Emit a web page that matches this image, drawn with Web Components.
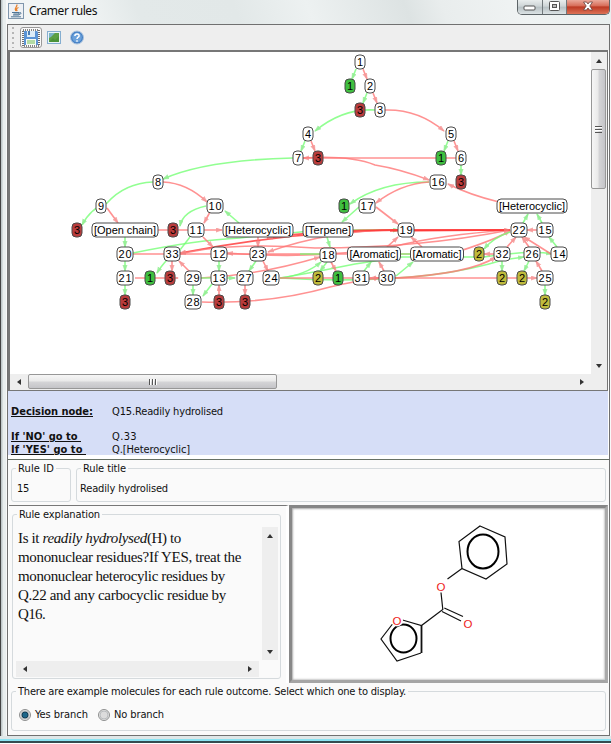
<!DOCTYPE html>
<html lang="en"><head><meta charset="utf-8"><title>Cramer rules</title>
<style>html,body{margin:0;width:611px;height:744px;overflow:hidden;background:#fff}
body{font:11px "DejaVu Sans Condensed","DejaVu Sans",sans-serif;color:#111}</style></head>
<body>
<cramer-window></cramer-window>
<script>
const define=(name,html,setup)=>customElements.define(name,class extends HTMLElement{
  connectedCallback(){
    if(this.shadowRoot)return;
    const r=this.attachShadow({mode:'open'});
    const t=document.createElement('template');t.innerHTML=html;
    r.append(t.content.cloneNode(true));
    if(setup)setup(this,r);
  }
});

// A text run whose tracking is set so that it fills the width in its "w" attribute.
define('ui-text',`<style>:host{display:inline-block;white-space:pre;line-height:13px}span{display:inline-block;text-decoration:inherit}</style><span><slot></slot></span>`,
(h,r)=>{const s=r.querySelector('span'),w=+h.getAttribute('w');h.style.width=w+'px';
  const n=h.textContent.length;s.style.letterSpacing=((w-s.getBoundingClientRect().width)/n)+'px';});

define('scroll-bar',`<style>
:host{display:flex;flex-direction:column;background:#eee;box-sizing:border-box;align-items:center}
:host([dir=h]){flex-direction:row}
.b{flex:none;width:16px;height:17px;display:flex;align-items:center;justify-content:center}
:host([dir=h]) .b{width:18px;height:16px}
.track{flex:1;display:flex;flex-direction:column;align-self:stretch}
:host([dir=h]) .track{flex-direction:row}
.thumb{box-sizing:border-box;border:1px solid #979797;border-radius:2px;background:linear-gradient(90deg,#f6f6f6,#e9e9e9 48%,#d5d5d7 52%,#c4c4c8);display:flex;align-items:center;justify-content:center;margin:0 1px 0 0}
:host([dir=h]) .thumb{background:linear-gradient(#f6f6f6,#e9e9e9 48%,#d5d5d7 52%,#c4c4c8);margin:0 0 1px}
.g{width:7px;height:7px;background:repeating-linear-gradient(#555 0 1px,#fff 1px 2px,transparent 2px 3px)}
:host([dir=h]) .g{width:8px;height:6px;background:repeating-linear-gradient(90deg,#555 0 1px,#fff 1px 2px,transparent 2px 3px)}
svg{display:block}</style>
<div class="b"><svg width="6" height="6"><path fill="#333"/></svg></div><div class="track"></div><div class="b"><svg width="6" height="6"><path fill="#333"/></svg></div>`,
(h,r)=>{const hz=h.getAttribute('dir')==='h',p=r.querySelectorAll('path');
  p[0].setAttribute('d',hz?'M5 0V6L1 3Z':'M0 5H6L3 1Z');p[1].setAttribute('d',hz?'M1 0V6L5 3Z':'M0 1H6L3 5Z');
  const t=h.getAttribute('thumb');
  if(t){const d=document.createElement('div');d.className='thumb';d.style[hz?'width':'height']=t+'px';d.innerHTML='<div class="g"></div>';r.querySelector('.track').append(d);}});

define('title-bar',`<style>
:host{display:flex;height:24px;align-items:flex-start;background:linear-gradient(70deg,#f2f5f5 0 12%,#e3e9e9 22%,#e2e8e8 38%,#edf1f1 50%,#dde3e3 66%,#e9eded 72%,#f0f3f3 85%,#e8eeee)}
.icon{margin:3px 5px 0 8px;width:16px;height:16px}
:host{margin-left:1px}.icon{margin-left:0}
ui-text{font:12px "Noto Sans",sans-serif;margin-top:2px;flex:none;line-height:17px}
.btns{margin-left:auto;margin-right:1px;display:flex;box-sizing:border-box;width:93px;height:15px;border:1px solid #5d6467;border-top:0;border-radius:0 0 5px 5px;overflow:hidden}
.btns div{display:flex;justify-content:center;width:25px;border-right:1px solid #71787b;background:linear-gradient(#e9eded,#cdd4d6 45%,#b7c0c3 50%,#dbe2e4);box-sizing:border-box}
.btns .x{width:42px;border:0;background:linear-gradient(#eaa99b,#d8705c 40%,#bd3a24 50%,#dc7256)}
</style>
<svg class="icon" viewBox="0 0 16 16"><rect x=".5" y=".5" width="15" height="15" fill="#eef1f5" stroke="#8096ac"/><path d="M8.800 1.500C10 4 5.500 4.500 7.800 8M10.500 4.500C8 5.500 8 6.500 9.300 8" fill="none" stroke="#e8822c" stroke-width="1.300"/><path d="M4 9.500h7v1.500H5.500M5 12h6M3 13.800h10M11.500 9.500c2.500-.3 1.500 2-.5 2.200" fill="none" stroke="#4f7595"/></svg>
<ui-text w="68">Cramer rules</ui-text>
<div class="btns"><div><svg width="13" height="14"><rect x="1" y="6" width="11" height="4" rx="1" fill="#fff" stroke="#555"/></svg></div>
<div><svg width="13" height="14"><rect x="1.500" y="1.500" width="10" height="9" rx="1" fill="#fff" stroke="#555"/><rect x="4.500" y="4.500" width="4" height="3" fill="#bbb" stroke="#555"/></svg></div>
<div class="x"><svg width="14" height="14"><path d="M2.500 2H5.500L7 4L8.500 2H11.500L8.800 6L11.500 10H8.500L7 8L5.500 10H2.500L5.200 6Z" fill="#fff" stroke="#67413c" stroke-width=".8"/></svg></div></div>`);

define('tool-bar',`<style>
:host{display:flex;height:25px;background:#eee;align-items:center;padding-left:4px;box-sizing:border-box}
.grip{width:2px;height:21px;background:repeating-linear-gradient(#b5b5b5 0 2px,transparent 2px 5px);margin-right:6px}
.save{width:22px;height:21px;box-sizing:border-box;border:1px solid #999;border-radius:3px;background:#fafafa;display:flex;align-items:center;justify-content:center;margin-right:4px}
.pic{margin-right:7px}svg{display:block}
</style><div class="grip"></div>
<div class="save"><svg width="18" height="18"><path d="M2 2H15L16 3V16H2Z" fill="#5b94d6"/><rect x="5" y="2" width="8" height="6" fill="#dcecf8"/><rect x="6" y="2" width="2" height="4" fill="#4c7eb5"/><rect x="4" y="10" width="10" height="6" fill="#f5faf4"/><path d="M5 12H13M5 14H13" stroke="#70bb55"/><rect x="1" y="1" width="16" height="16" fill="none" stroke="#111" stroke-width="1.200" stroke-dasharray="1 1"/></svg></div>
<svg class="pic" width="16" height="16"><rect x="1.500" y="1.500" width="13" height="12" fill="#e9f3f8" stroke="#85aed0"/><rect x="3" y="3" width="10" height="9" fill="#5b9f45"/><path d="M3 3H9L5 7L3 8Z" fill="#79b3c4"/><path d="M3 12L7 8L9 10L13 6V12Z" fill="#4b9339"/></svg>
<svg width="16" height="16"><circle cx="8" cy="7.500" r="6.500" fill="#4882c5" stroke="#a9c3df"/><circle cx="8" cy="7.500" r="4.800" fill="#6ba1db"/><path d="M5.900 6C5.900 3.300 10.200 3.300 10.100 5.900C10.100 7.200 8 7.200 8 9M8 10.300V11.800" fill="none" stroke="#fff" stroke-width="1.500"/></svg>`);

define('rule-graph',`<style>:host{display:block;width:581px;height:322px;background:#fff}svg{display:block}
text{font:11px "Liberation Sans",Arial,sans-serif;text-anchor:middle;fill:#000}
.R{stroke:#f77}.G{stroke:#7f7}.D{stroke:#f33}
path.e{fill:none;stroke-width:1.600;opacity:.8}</style>
<svg width="581" height="322" viewBox="10 52 581 322"><defs>
<marker id="mR" markerUnits="userSpaceOnUse" markerWidth="8" markerHeight="6" refX="6" refY="2.500" orient="auto"><path d="M0 0L7 2.500L0 5Z" fill="#f28080" fill-opacity=".85"/></marker>
<marker id="mG" markerUnits="userSpaceOnUse" markerWidth="8" markerHeight="6" refX="6" refY="2.500" orient="auto"><path d="M0 0L7 2.500L0 5Z" fill="#7bea7b" fill-opacity=".85"/></marker></defs><g id="e"></g><g id="n"></g></svg>`,
(h,r)=>{
 const edges=`G M356 69L352 79
R M363 69L367 79
G M367 93L363 103
R M373 93L377 103
G M375 110Q343 108 315 131
R M385 110Q418 109 444 131
G M305 141L301 151
R M311 141L315 151
G M448 141L444 151
R M454 141L458 151
G M461 165V175
R M456 158H303
G M293 158Q206 160 163 179
R M303 158Q350 155 375 165Q400 169 429 180
G M153 182Q125 183 107 203Q91 208 82 225
R M163 182Q187 183 207 202
R M107 208L118 223
G M206 206Q183 211 180 226
R M210 212L204 223
R M92 230H222
G M239 223L225 211
G M429 182Q380 182 350 204
G M359 207L342 222
R M429 182Q400 184 376 203
R M376 207L398 224
R M499 202Q470 195 448 184
G M125 237V247
G M125 261V271
G M125 285V295
R M131 254H450Q490 242 510 231
G M133 253Q196 240 240 238Q285 233 325 230H399
D M510 230H410Q300 230 180 253
R M510 230Q420 248 315 248Q230 242 180 254
R M510 230Q440 235 396 246Q320 260 227 253
R M399 230Q330 230 268 252
D M510 230H410Q330 229 267 238
G M190 237L180 250Q166 258 157 273
R M203 237L213 247
R M258 237V247
R M172 261V271
R M190 272L179 261
R M135 278H178
R M201 278Q260 275 320 257
G M219 261V271
G M256 261L249 271
R M263 261L268 271
G M193 285V295
G M212 284L203 296
G M201 278H235
G M280 278Q306 275 321 262
G M280 278Q310 273 355 264L402 257H484Q530 250 552 254
G M280 278Q420 286 503 260L524 257
G M327 237L330 247
G M327 262L320 271
R M331 262L336 271
R M219 295V285
R M245 285V295
R M202 302Q270 304 330 287Q360 280 380 278
R M280 278H537
R M380 278H370
G M364 271L371 262
R M384 271L379 262
G M396 276L413 262
R M387 247L398 237
R M422 247L411 237
R M394 278Q470 274 496 257
G M424 254H382
G M401 254H365
R M494 254H484
G M510 232Q493 238 484 249
G M523 223L528 214
G M542 223L537 214
R M553 230H527
R M507 247L516 237
R M529 247L522 237
R M551 254Q540 247 524 237
G M557 247L549 237
G M502 261V271
G M529 261L524 271
R M542 271L536 261
G M545 285V295
D M390 231L510 230
G M300 254H330`.split('\n');
 r.querySelector('#e').innerHTML=edges.map(l=>{const c=l[0],m=c==='G'?'mG':'mR';return `<path class="e ${c}" d="${l.slice(2)}" marker-end="url(#${m})"/>`}).join('');
 const nodes=`1 360 62|1 350 86 g|2 370 86|3 360 110 r|3 380 110|4 308 134|5 451 134|7 298 158|3 318 158 r|1 441 158 g|6 461 158|8 158 182|16 438 182|3 461 182 r|9 101 206|10 215 206|1 344 206 g|17 367 206|[Heterocyclic] 532 206|3 77 230 r|[Open_chain] 125 230|3 173 230 r|11 196 230|[Heterocyclic] 258 230|[Terpene] 328 230|19 406 230|22 519 230|15 545 230|20 125 254|33 172 254|12 219 254|23 258 254|18 328 255|[Aromatic] 374 254|[Aromatic] 437 254|2 479 254 y|32 502 254|26 532 254|14 559 254|21 125 278|1 150 278 g|3 170 278 r|29 193 278|13 219 278|27 245 278|24 271 278|2 318 278 y|1 338 278 g|31 361 278|30 387 278|2 502 278 y|2 522 278 y|25 545 278|3 125 302 r|28 193 302|3 219 302 r|3 245 302 r|2 545 302 y`.split('|');
 const W={'[Heterocyclic]':70,'[Open chain]':66,'[Terpene]':50,'[Aromatic]':53},F={g:'#3fbf3f',r:'#b93c3c',y:'#c0bb3c'};
 r.querySelector('#n').innerHTML=nodes.map(s=>{let [t,x,y,f]=s.split(' ');t=t.replace('_',' ');const w=W[t]||(t.length>1?16:10);
  return `<rect x="${x-w/2}" y="${y-7}" width="${w}" height="14" rx="4" fill="${F[f]||'#fff'}" stroke="#4a4a4a"/><text x="${x}" y="${+y+4}" ${t.length>1?`textLength="${w-(t.length>2?4:3)}" lengthAdjust="spacing"`:''}>${t}</text>`}).join('');
});

define('graph-pane',`<style>:host{display:grid;grid-template:322px 16px/581px 16px;width:597px;height:338px;border:solid #777;border-width:2px 1px 1px 2px;background:#eee}
</style><rule-graph></rule-graph><scroll-bar thumb="120"></scroll-bar><scroll-bar dir="h" thumb="249"></scroll-bar>`);

define('decision-info',`<style>:host{display:grid;grid-template-columns:101px 1fr;grid-template-rows:25px 13px 13px;align-items:start;box-sizing:border-box;height:64px;width:600px;padding:14px 0 0 3px;background:#d6def7;overflow:hidden}
b ui-text{text-decoration:underline;text-decoration-thickness:1px;text-underline-offset:1px}</style>
<b><ui-text w="82">Decision node:</ui-text></b><span><ui-text w="111">Q15.Readily hydrolised</ui-text></span>
<b><ui-text w="70">If 'NO' go to </ui-text></b><span><ui-text w="25">Q.33</ui-text></span>
<b><ui-text w="75">If 'YES' go to </ui-text></b><span><ui-text w="78">Q.[Heterocyclic]</ui-text></span>`);

// Titled group box: the legend slot interrupts the top border.
define('group-box',`<style>:host{display:block}fieldset{box-sizing:border-box;width:100%;height:100%;margin:0;padding:0;min-width:0;border:1px solid #d5dadd;border-radius:3px}
legend{padding:0 2px;margin-left:4px;height:13px;line-height:13px}slot{display:block}slot[name]{display:inline-block}</style><fieldset><legend><slot name="title"></slot></legend><slot></slot></fieldset>`);

define('rule-header',`<style>:host{display:flex;gap:5px;box-sizing:border-box;height:45px;padding:2px 3px 3px;background:#fafafa}
group-box{height:40px}.id{width:60px}.t{flex:1}.v{padding:7px 0 0 5px}.t .v{padding-left:3px}</style>
<group-box class="id"><ui-text slot="title" w="36">Rule ID</ui-text><div class="v"><ui-text w="12">15</ui-text></div></group-box>
<group-box class="t"><ui-text slot="title" w="43">Rule title</ui-text><div class="v"><ui-text w="88">Readily hydrolised</ui-text></div></group-box>`);

define('rule-explanation',`<style>:host{display:block;box-sizing:border-box;width:280px;height:178px;padding:2px 5px 3px 3px;border-top:1px solid #777;border-right:3px solid #fff;background:#fafafa}
group-box{height:171px}
.g{display:grid;grid-template:133px 16px/243px 16px;column-gap:3px;row-gap:1px;margin:6px 0 0 3px}
.doc{font:15px/19px "Liberation Serif","Times New Roman",serif;padding:2px 0 0 2px}
.doc ui-text{display:block;line-height:19px}</style>
<group-box><ui-text slot="title" w="81">Rule explanation</ui-text><div class="g"><div class="doc">
<ui-text w="163">Is it <i>readily hydrolysed</i>(H) to</ui-text><ui-text w="223">mononuclear residues?If YES, treat the</ui-text><ui-text w="207">mononuclear heterocylic residues by</ui-text><ui-text w="208">Q.22 and any carbocyclic residue by</ui-text><ui-text w="27">Q16.</ui-text></div>
<scroll-bar></scroll-bar><scroll-bar dir="h"></scroll-bar></div></group-box>`);

define('molecule-view',`<style>:host{display:block;box-sizing:border-box;width:319px;height:178px;background:#fff;border:3px solid #999;border-color:#868686 #aaa #a5a5a5 #888;box-shadow:inset 1px 1px 2px #aaa,inset -1px -1px 2px #ccc}
svg{display:block}text{font:11.500px "Liberation Sans",Arial,sans-serif;fill:#e22;text-anchor:middle}</style>
<svg width="313" height="172" viewBox="291.500 508.500 313 172"><g fill="none" stroke="#111" stroke-width="1.200">
<path d="M479.500 526.500L504.500 537.500L506.500 564.500L485.500 579.500L461.500 569L458.500 542Z"/><ellipse cx="482.500" cy="552" rx="15.500" ry="17" stroke="#000" stroke-width="2"/>
<path d="M461.500 569L447 579.500M440.500 593L442.300 610L421 626L402 620.500M443.800 608.500L462.500 617M441.500 612L460.500 621.500M392 624.500L380.500 639.500L396.500 661.500L420.500 653.500"/><path d="M421 626V653.500" stroke-width="1.800"/><ellipse cx="403" cy="639" rx="13" ry="14" stroke="#000" stroke-width="2"/></g>
<circle cx="396.500" cy="621" r="6" fill="#fff"/><text x="396.500" y="625">O</text><text x="440.500" y="591">O</text><text x="467.500" y="628">O</text></svg>`);

define('radio-option',`<style>:host{display:flex;align-items:center;gap:4px}svg{display:block}</style><svg width="12" height="12"><circle cx="6" cy="6" r="5.500" fill="#e8e8e8" stroke="#8e8f8f"/><circle cx="6" cy="6" r="4" fill="#dcdcdc" stroke="#b9bcbe"/><circle id="d" cx="6" cy="6" r="3" fill="#1d6689" stroke="#103c55" visibility="hidden"/></svg><slot></slot>`,
(h,r)=>{if(h.hasAttribute('checked'))r.querySelector('#d').setAttribute('visibility','visible')});

define('branch-picker',`<style>:host{display:block;box-sizing:border-box;height:52px;padding:2px 3px 4px 3px;background:#fafafa}group-box{height:46px}
.r{display:flex;gap:10px;padding:10px 0 0 7px}</style>
<group-box><ui-text slot="title" w="388">There are example molecules for each rule outcome. Select which one to display.</ui-text>
<div class="r"><radio-option checked><ui-text w="53">Yes branch</ui-text></radio-option><radio-option><ui-text w="50">No branch</ui-text></radio-option></div></group-box>`);

define('cramer-window',`<style>:host{display:block;box-sizing:border-box;width:611px;height:743px;background:linear-gradient(90deg,#444 0 1px,#bfc7c9 1px 2px,#e9eeee 3px 6px,#f8f8f8 6px);border-bottom:2px solid #354b50}
.body{box-sizing:border-box;margin-left:7px;width:603px;height:712px;border:1px solid #707070;background:#fff}
title-bar{margin-left:8px}rule-header{margin-top:4px;border-top:1px solid #667066;height:46px;width:601px}
.low{display:flex;width:601px;padding-left:1px;box-sizing:border-box}
branch-picker{width:601px}
.foot{height:5px;background:linear-gradient(#dfe7e8 0 3px,#8be3f2 3px)}</style>
<title-bar></title-bar><div class="body"><tool-bar></tool-bar><graph-pane></graph-pane><decision-info></decision-info><rule-header></rule-header><div class="low"><rule-explanation></rule-explanation><molecule-view></molecule-view></div><branch-picker></branch-picker></div><div class="foot"></div>`);
</script></body></html>
